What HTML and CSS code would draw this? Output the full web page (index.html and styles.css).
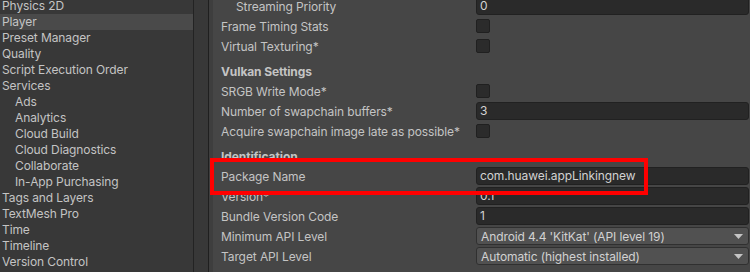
FILE: index.html
```html
<!DOCTYPE html>
<html>
<head>
<meta charset="utf-8">
<link rel="stylesheet" href="styles.css">
</head>
<body>
<div class="window">
  <div class="sidebar">
    <div class="item">Physics 2D</div>
    <div class="item selected">Player</div>
    <div class="item">Preset Manager</div>
    <div class="item">Quality</div>
    <div class="item">Script Execution Order</div>
    <div class="item">Services</div>
    <div class="item sub">Ads</div>
    <div class="item sub">Analytics</div>
    <div class="item sub">Cloud Build</div>
    <div class="item sub">Cloud Diagnostics</div>
    <div class="item sub">Collaborate</div>
    <div class="item sub">In-App Purchasing</div>
    <div class="item">Tags and Layers</div>
    <div class="item">TextMesh Pro</div>
    <div class="item">Time</div>
    <div class="item">Timeline</div>
    <div class="item">Version Control</div>
  </div>
  <div class="track"></div>
  <div class="splitter"></div>
  <div class="main">
    <div class="content">
      <div class="row"><div class="label indent">Streaming Priority</div><div class="field">0</div></div>
      <div class="row"><div class="label">Frame Timing Stats</div><div class="check"></div></div>
      <div class="row"><div class="label">Virtual Texturing*</div><div class="check"></div></div>
      <div class="header">Vulkan Settings</div>
      <div class="row"><div class="label">SRGB Write Mode*</div><div class="check"></div></div>
      <div class="row"><div class="label">Number of swapchain buffers*</div><div class="field">3</div></div>
      <div class="row"><div class="label">Acquire swapchain image late as possible*</div><div class="check"></div></div>
      <div class="header">Identification</div>
      <div class="row"><div class="label">Package Name</div><div class="field">com.huawei.appLinkingnew</div></div>
      <div class="row"><div class="label">Version*</div><div class="field">0.1</div></div>
      <div class="row"><div class="label">Bundle Version Code</div><div class="field">1</div></div>
      <div class="row"><div class="label">Minimum API Level</div><div class="dropdown"><span>Android 4.4 'KitKat' (API level 19)</span><svg class="arrow" width="9" height="5" viewBox="0 0 9 5"><path d="M0 0 H9 L4.5 5 Z" fill="#c4c4c4"/></svg></div></div>
      <div class="row"><div class="label">Target API Level</div><div class="dropdown"><span>Automatic (highest installed)</span><svg class="arrow" width="9" height="5" viewBox="0 0 9 5"><path d="M0 0 H9 L4.5 5 Z" fill="#c4c4c4"/></svg></div></div>
    </div>
    <div class="highlight"></div>
  </div>
</div>
</body>
</html>
```

FILE: styles.css
```css
html, body {
  margin: 0;
  padding: 0;
  width: 750px;
  height: 272px;
  overflow: hidden;
  background: #464646;
}
.window {
  display: flex;
  width: 750px;
  height: 272px;
  font-family: Inter, "Noto Sans", sans-serif;
  font-size: 12px;
  letter-spacing: -0.1px;
  color: #c4c4c4;
}
.sidebar {
  width: 193px;
  flex: none;
  background: #383838;
  border-right: 1px solid #232323;
  margin-top: -2px;
}
.item {
  height: 16px;
  line-height: 16px;
  padding-left: 2px;
  white-space: nowrap;
}
.item.sub {
  padding-left: 15px;
}
.item.selected {
  background: #4a4a4a;
}
.track {
  width: 14px;
  flex: none;
  background: #383838;
}
.splitter {
  width: 1px;
  flex: none;
  background: #1f1f1f;
}
.main {
  position: relative;
  flex: 1;
  background: #464646;
  border-left: 4px solid #3e3e3e;
}
.content {
  margin-top: -4px;
  padding-left: 8px;
  padding-right: 1px;
}
.row {
  display: flex;
  align-items: center;
  height: 20px;
}
.label {
  width: 255px;
  flex: none;
  white-space: nowrap;
}
.label.indent {
  padding-left: 15px;
  width: 240px;
}
.header {
  margin-top: 7px;
  height: 18px;
  line-height: 18px;
  font-weight: bold;
}
.field {
  flex: 1;
  height: 16px;
  line-height: 16px;
  padding-left: 3px;
  background: #2a2a2a;
  border: 1px solid #212121;
  border-radius: 3px;
  color: #d2d2d2;
  white-space: nowrap;
}
.check {
  width: 12px;
  height: 12px;
  background: #2b2b2b;
  border: 1px solid #202020;
  border-radius: 2px;
}
.dropdown {
  flex: 1;
  height: 16px;
  display: flex;
  align-items: center;
  justify-content: space-between;
  padding-left: 4px;
  padding-right: 5px;
  background: #515151;
  border: 1px solid #303030;
  border-radius: 3px;
  color: #d2d2d2;
  white-space: nowrap;
}
.arrow {
  display: block;
}
.highlight {
  position: absolute;
  left: -3px;
  top: 158px;
  width: 430px;
  height: 29px;
  border: 4px solid #ff0000;
}
```
